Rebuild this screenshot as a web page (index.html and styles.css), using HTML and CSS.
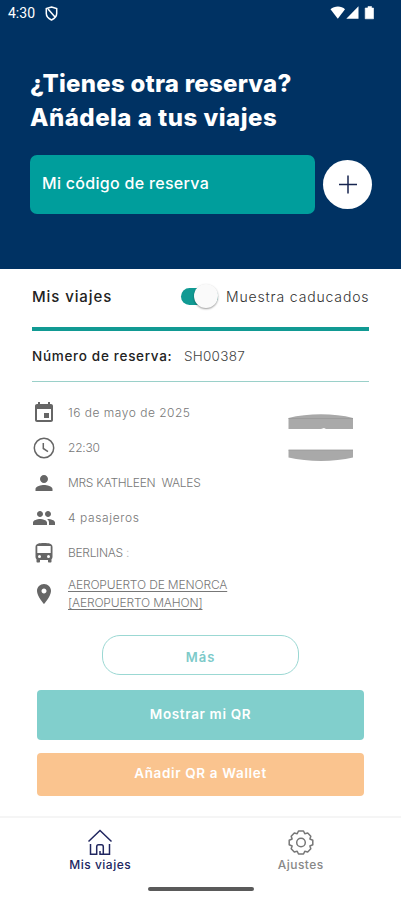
FILE: index.html
```html
<!DOCTYPE html>
<html lang="es">
<head>
    <meta charset="UTF-8">
    <meta name="viewport" content="width=device-width, initial-scale=1.0">
    <title>Mis viajes</title>
    <link rel="stylesheet" href="styles.css">
</head>
<body>
    <header class="hero">
        <div class="status-bar">
            <span class="clock">4:30</span>
            <svg class="status-shield" width="13" height="15" viewBox="0 0 13 15" fill="none" stroke="#fff" stroke-width="1.5">
                <path d="M6.5 1 L11.7 2.5 V7.5 C11.7 10.5 9.2 12.6 6.5 14 C3.8 12.6 1.3 10.5 1.3 7.5 V2.5 Z"/>
                <path d="M3 3 L10 11"/>
            </svg>
            <svg class="status-icons" width="46" height="14" viewBox="0 0 46 14" fill="#fff">
                <path d="M0.5 3.2 C4.5 -0.3 11.5 -0.3 15 3.2 L7.8 12.8 Z"/>
                <path d="M28.5 0.3 V12.8 H16.3 Z"/>
                <path d="M36 2 h2 v-1.6 h3.5 v1.6 h2 v10.8 h-8.3 v-10.8 z" stroke="#fff" stroke-width="0.6" stroke-linejoin="round"/>
            </svg>
        </div>

        <h1>¿Tienes otra reserva?<br><span class="title-second">Añádela a tus viajes</span></h1>

        <div class="search-row">
            <div class="code-input"><span>Mi código de reserva</span></div>
            <button type="button" class="btn-add" aria-label="Añadir">
                <svg width="20" height="20" viewBox="0 0 20 20" stroke="#17254f" stroke-width="1.5">
                    <path d="M1 9.500 H19 M10 0.500 V18.500"/>
                </svg>
            </button>
        </div>
    </header>

    <main class="trips">
        <div class="trips-header">
            <h2>Mis viajes</h2>
            <div class="switch"><span class="knob"></span></div>
            <span class="switch-label">Muestra caducados</span>
        </div>

        <div class="booking">
            <span class="booking-label">Número de reserva:</span>
            <span class="booking-code">SH00387</span>
        </div>

        <div class="details">
            <ul class="detail-list">
                <li>
                    <svg class="icon" viewBox="0 0 24 24"><path d="M17 12h-5v5h5v-5zM16 1v2H8V1H6v2H5c-1.1 0-2 .9-2 2v14c0 1.1.9 2 2 2h14c1.1 0 2-.9 2-2V5c0-1.100-.9-2-2-2h-1V1h-2zm3 18H5V8h14v11z"/></svg>
                    <span class="date">16 de mayo de 2025</span>
                </li>
                <li>
                    <svg class="icon icon-clock" viewBox="0 0 24 24"><circle cx="12" cy="12" r="9.700"/><path d="M11.300 7V12.500L16 15.600"/></svg>
                    <span class="time">22:30</span>
                </li>
                <li>
                    <svg class="icon" viewBox="0 0 24 24"><path d="M12 12c2.210 0 4-1.790 4-4s-1.790-4-4-4-4 1.790-4 4 1.790 4 4 4zm0 2c-2.670 0-8.500 1.340-8.500 4v2h17v-2c0-2.660-5.830-4-8.500-4z"/></svg>
                    <span class="name">MRS KATHLEEN&nbsp; WALES</span>
                </li>
                <li>
                    <svg class="icon" viewBox="0 0 24 24"><path d="M16 11c1.660 0 2.990-1.340 2.990-3S17.660 5 16 5s-3 1.340-3 3 1.340 3 3 3zM8 11c1.660 0 2.990-1.340 2.990-3S9.660 5 8 5 5 6.340 5 8s1.340 3 3 3zM8 13c-2.330 0-7 1.170-7 3.500V19h14v-2.500C15 14.170 10.330 13 8 13zM16 13c-.290 0-.620.020-.970.050C16.190 13.890 17 15.020 17 16.500V19h6v-2.500c0-2.330-4.670-3.500-7-3.500z"/></svg>
                    <span class="people">4 pasajeros</span>
                </li>
                <li>
                    <svg class="icon" viewBox="0 0 24 24"><path fill-rule="evenodd" d="M3.500 16c0 .9.400 1.700 1 2.200V20.500c0 .6.400 1 1 1h1.500c.6 0 1-.4 1-1V19h8v1.500c0 .6.400 1 1 1h1.500c.6 0 1-.4 1-1V18.200c.6-.5 1-1.300 1-2.200V6c0-3.500-3.600-4-8.500-4s-8.500.5-8.500 4v10zM7.500 17a1.500 1.500 0 1 1 0-3 1.500 1.500 0 0 1 0 3zM16.500 17a1.500 1.500 0 1 1 0-3 1.500 1.500 0 0 1 0 3zM18.700 12h-13.400V5h13.400v7z"/></svg>
                    <span class="vehicle">BERLINAS <i>:</i></span>
                </li>
                <li class="place-row">
                    <svg class="icon" viewBox="0 0 24 24"><path d="M12 2C8.130 2 5 5.130 5 9c0 5.250 7 13 7 13s7-7.750 7-13c0-3.870-3.130-7-7-7zm0 9.500c-1.380 0-2.500-1.120-2.500-2.500s1.120-2.500 2.500-2.500 2.500 1.120 2.500 2.500-1.120 2.500-2.500 2.500z"/></svg>
                    <a class="place">AEROPUERTO DE MENORCA<br>[AEROPUERTO MAHON]</a>
                </li>
            </ul>
            <svg class="vehicle-logo" width="66" height="48" viewBox="0 0 66 48" fill="#a9a9a9">
                <path d="M0.500 4 C20 -1 46 -1 65 4 V15 H38 L36 14 L33 15 H0.500 Z"/>
                <path d="M0.500 36 H65 V43.500 C46 48 20 48 0.500 43.500 Z"/>
                <path d="M0.500 4.500 H65 M0.500 36 H65" stroke="#999" stroke-width="0.800"/>
            </svg>
        </div>

        <button type="button" class="btn-more">Más</button>
        <button type="button" class="btn btn-qr">Mostrar mi QR</button>
        <button type="button" class="btn btn-wallet">Añadir QR a Wallet</button>
    </main>

    <nav class="tab-bar">
        <div class="tabs">
            <a class="tab active">
                <svg width="26" height="27" viewBox="0 0 26 27" fill="none" stroke="#20265f" stroke-width="1.500">
                    <path d="M1.500 12.500 L13 1.500 L24.500 12.500"/>
                    <path d="M3.500 15 V25.300 H9.700 V18 Q9.700 15.800 11.500 15.800 H14.500 Q16.300 15.800 16.300 18 V25.300 H22.500 V15 M13 22 V25.300 H16.300"/>
                </svg>
                <span>Mis viajes</span>
            </a>
            <a class="tab">
                <svg width="26" height="27" viewBox="0 0 26 27" fill="none" stroke="#777" stroke-width="1.500">
                    <path d="M10.500 2 H15.500 L16.800 4.800 L19.700 4 L22.800 7.200 L21.900 10 L24.800 11.300 V15.700 L21.900 17 L22.800 19.800 L19.700 23 L16.800 22.200 L15.500 25 H10.500 L9.200 22.200 L6.300 23 L3.200 19.800 L4.100 17 L1.200 15.700 V11.300 L4.100 10 L3.200 7.200 L6.300 4 L9.200 4.800 Z" stroke-linejoin="round"/>
                    <circle cx="13" cy="13.500" r="4.300"/>
                </svg>
                <span>Ajustes</span>
            </a>
        </div>
        <div class="home-indicator"></div>
    </nav>
</body>
</html>
```

FILE: styles.css
```css
* {
    box-sizing: border-box;
}

body {
    margin: 0;
    height: 900px;
    display: flex;
    flex-direction: column;
    overflow: hidden;
    background-color: #fff;
    font-family: Inter, sans-serif;
    color: #222;
}

button {
    border: none;
    padding: 0;
    font-family: inherit;
}

.hero {
    height: 269px;
    background-color: #003263;
    color: #fff;
}

.status-bar {
    display: flex;
    align-items: center;
    height: 26px;
    padding: 0 25px 0 8px;
}

.clock {
    width: 37px;
    font-family: Roboto, sans-serif;
    font-size: 14px;
}

.status-icons {
    margin-left: auto;
}

h1 {
    margin: 41px 0 0 30px;
    font-size: 24px;
    font-weight: 800;
    line-height: 34px;
    letter-spacing: 0.25px;
    white-space: nowrap;
}

.title-second {
    letter-spacing: 0.5px;
}

.search-row {
    display: flex;
    align-items: center;
    gap: 8px;
    margin: 20px 0 0 30px;
}

.code-input {
    width: 285px;
    height: 59px;
    padding: 18px 12px;
    border-radius: 7px;
    background-color: #009e9c;
    font-size: 16px;
    font-weight: 500;
    line-height: 20px;
    letter-spacing: 0.3px;
}

.btn-add {
    display: flex;
    align-items: center;
    justify-content: center;
    width: 49px;
    height: 49px;
    border-radius: 50%;
    background-color: #fff;
}

.trips {
    flex: 1;
    padding: 0 32px;
}

.trips-header {
    display: flex;
    align-items: center;
    height: 62px;
    padding-bottom: 4px;
    border-bottom: 4px solid #119a93;
    white-space: nowrap;
}

h2 {
    margin: 0;
    font-size: 15px;
    font-weight: 500;
    letter-spacing: 0.9px;
}

.switch {
    display: flex;
    justify-content: flex-end;
    align-items: center;
    width: 37px;
    height: 17px;
    margin-left: auto;
    border-radius: 9px;
    background-color: #119a93;
}

.knob {
    width: 24px;
    height: 24px;
    flex: none;
    border-radius: 50%;
    background-color: #fafafa;
    box-shadow: 0 1px 2px rgba(0, 0, 0, 0.4);
}

.switch-label {
    width: 143px;
    margin-left: 8px;
    font-size: 14px;
    font-weight: 300;
    letter-spacing: 0.85px;
    color: #333;
}

.booking {
    display: flex;
    align-items: center;
    height: 51px;
    border-bottom: 1px solid #9ad0c9;
    font-size: 13.5px;
    white-space: nowrap;
}

.booking-label {
    width: 152px;
    font-weight: 500;
    letter-spacing: 0.7px;
}

.booking-code {
    font-weight: 300;
    letter-spacing: 0.25px;
    color: #444;
}

.details {
    display: flex;
    justify-content: space-between;
    padding-top: 13px;
}

.detail-list {
    list-style: none;
    margin: 0;
    padding: 0;
}

.detail-list li {
    display: flex;
    align-items: center;
    gap: 12px;
    height: 35px;
    color: #777;
    font-size: 12px;
    font-weight: 300;
    line-height: 17.5px;
    white-space: nowrap;
}

.detail-list .place-row {
    height: 47px;
}

.date {
    letter-spacing: 0.5px;
}

.time {
    letter-spacing: -0.2px;
}

.name {
    letter-spacing: -0.3px;
}

.people {
    letter-spacing: 0.6px;
}

.vehicle {
    letter-spacing: -0.3px;
}

.vehicle i {
    font-style: normal;
    color: #bbb;
}

.icon {
    width: 24px;
    height: 24px;
    fill: #666;
}

.icon-clock {
    fill: none;
    stroke: #666;
    stroke-width: 1.5;
}

.place {
    text-decoration: underline;
    text-underline-offset: 2px;
    letter-spacing: -0.15px;
}

.vehicle-logo {
    margin: 19px 15px 0 0;
}

.btn-more {
    display: block;
    width: 197px;
    height: 40px;
    margin: 18px auto 0;
    padding-top: 3px;
    border: 1px solid #9bd8d3;
    border-radius: 18px;
    background-color: #fff;
    color: #7dcac9;
    font-size: 13px;
    font-weight: 600;
    letter-spacing: 1px;
}

.btn {
    display: block;
    width: 327px;
    margin-left: 5px;
    border-radius: 4px;
    color: #fff;
    font-size: 13.5px;
    font-weight: 600;
    letter-spacing: 0.65px;
}

.btn-qr {
    height: 50px;
    margin-top: 15px;
    padding-bottom: 3px;
    background-color: #81cfcc;
}

.btn-wallet {
    height: 43px;
    margin-top: 13px;
    padding-bottom: 3px;
    background-color: #fac48f;
}

.tab-bar {
    height: 84px;
    border-top: 2px solid #f5f5f5;
}

.tabs {
    display: flex;
    height: 69px;
    padding-top: 11px;
}

.tab {
    display: flex;
    flex: 1;
    flex-direction: column;
    align-items: center;
    color: #888;
    font-size: 12px;
    font-weight: 500;
    line-height: 18px;
    letter-spacing: 0.5px;
}

.tab.active {
    color: #20265f;
}

.home-indicator {
    width: 106px;
    height: 4px;
    margin: 0 auto;
    border-radius: 2px;
    background-color: #5a5a5a;
}
```
